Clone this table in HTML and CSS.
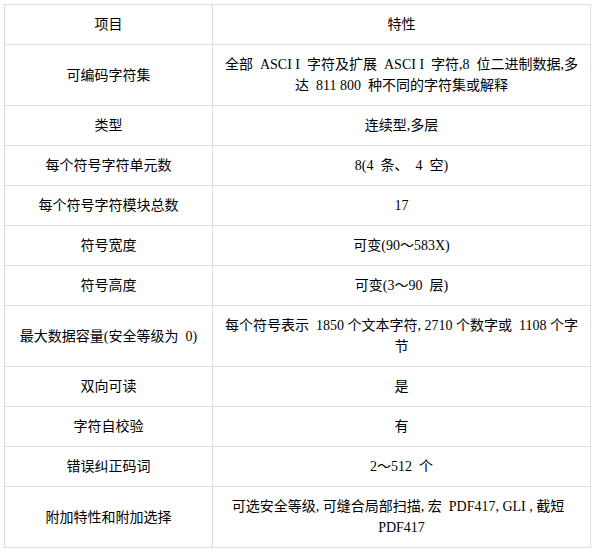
FILE: index.html
```html
<!DOCTYPE html>
<html lang="zh-CN">
<head>
<meta charset="utf-8">
<title>PDF417 特性</title>
<link rel="stylesheet" href="styles.css">
</head>
<body>
<table class="spec">
  <colgroup>
    <col class="col-item">
    <col class="col-value">
  </colgroup>
  <tbody>
    <tr><td>项目</td><td>特性</td></tr>
    <tr><td>可编码字符集</td><td>全部&ensp;ASCI I&ensp;字符及扩展&ensp;ASCI I&ensp;字符,8&ensp;位二进制数据,多达&ensp;811 800&ensp;种不同的字符集或解释</td></tr>
    <tr><td>类型</td><td>连续型,多层</td></tr>
    <tr><td>每个符号字符单元数</td><td>8(4&ensp;条、&ensp;4&ensp;空)</td></tr>
    <tr><td>每个符号字符模块总数</td><td>17</td></tr>
    <tr><td>符号宽度</td><td>可变(90～583X)</td></tr>
    <tr><td>符号高度</td><td>可变(3～90&ensp;层)</td></tr>
    <tr><td>最大数据容量(安全等级为&ensp;0)</td><td>每个符号表示&ensp;1850 个文本字符, 2710 个数字或&ensp;1108 个字节</td></tr>
    <tr><td>双向可读</td><td>是</td></tr>
    <tr><td>字符自校验</td><td>有</td></tr>
    <tr><td>错误纠正码词</td><td>2～512&ensp;个</td></tr>
    <tr><td>附加特性和附加选择</td><td>可选安全等级, 可缝合局部扫描, 宏&ensp;PDF417, GLI , 截短&ensp;PDF417</td></tr>
  </tbody>
</table>
</body>
</html>
```
FILE: styles.css
```css
html, body {
  margin: 0;
  padding: 0;
  background: #ffffff;
}

body {
  padding: 4px;
  font-family: "Liberation Serif", "Noto Sans CJK SC", serif;
  font-size: 14px;
  color: #000000;
}

.spec {
  border-collapse: collapse;
  width: 587px;
  table-layout: fixed;
}

.col-item {
  width: 208px;
}

.spec td {
  border: 1px solid #dddddd;
  padding: 9px 10px;
  line-height: 21px;
  text-align: center;
  vertical-align: middle;
}
```
